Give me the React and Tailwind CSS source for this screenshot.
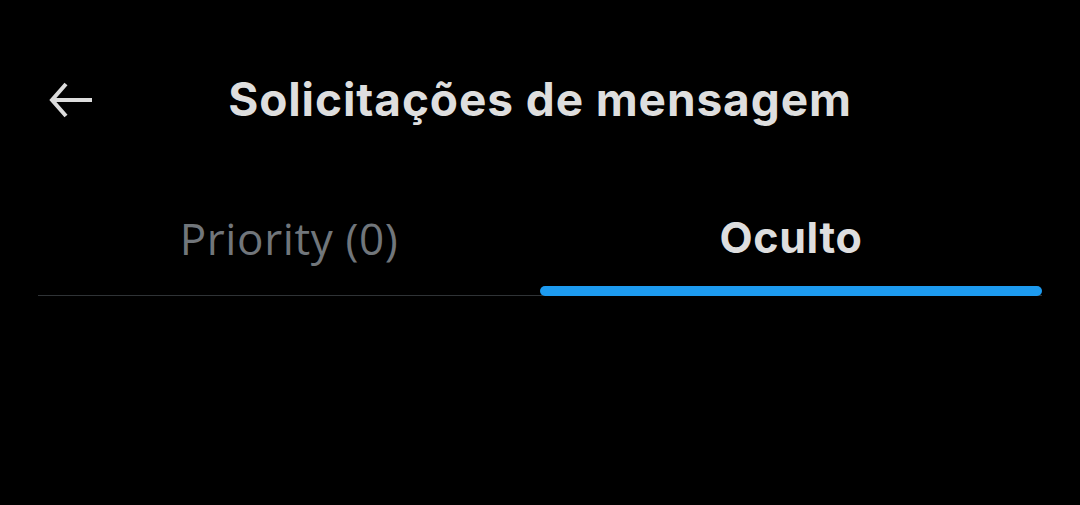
import React from "react";

export default function App() {
  return (
    <div className="w-[1080px] h-[505px] bg-black overflow-hidden" style={{ fontFamily: "Inter, 'Noto Sans', sans-serif" }}>
      <div className="h-[200px] grid grid-cols-[1fr_auto_1fr] items-center">
        <div className="pl-[49px] flex items-center">
          <svg width="44" height="36" viewBox="0 0 44 36" fill="none" stroke="#dcdcdc" strokeWidth="4" strokeLinecap="butt">
            <path d="M43 18H4" />
            <path d="M17 2L3 18L17 34" strokeLinejoin="miter" />
          </svg>
        </div>
        <h1 className="text-[46px] font-bold text-[#dedede] leading-none tracking-[0.9px] pb-[2px]">
          Solicitações de mensagem
        </h1>
        <div />
      </div>
      <div className="mx-[38px] flex border-b border-[#2f3336]">
        <div className="flex-1 h-[95px] flex items-center justify-center pb-[20px]">
          <span className="text-[44px] text-[#71767b] leading-none tracking-[0.6px]" style={{ fontFamily: "'Open Sans', sans-serif" }}>
            Priority (0)
          </span>
        </div>
        <div className="flex-1 h-[95px] relative flex items-center justify-center pb-[20px]">
          <span className="text-[43px] font-bold text-[#dedede] leading-none tracking-[0.6px]">Oculto</span>
          <div className="absolute left-0 right-0 bottom-[-1px] h-[10px] rounded-full bg-[#1d9bf0]" />
        </div>
      </div>
    </div>
  );
}
